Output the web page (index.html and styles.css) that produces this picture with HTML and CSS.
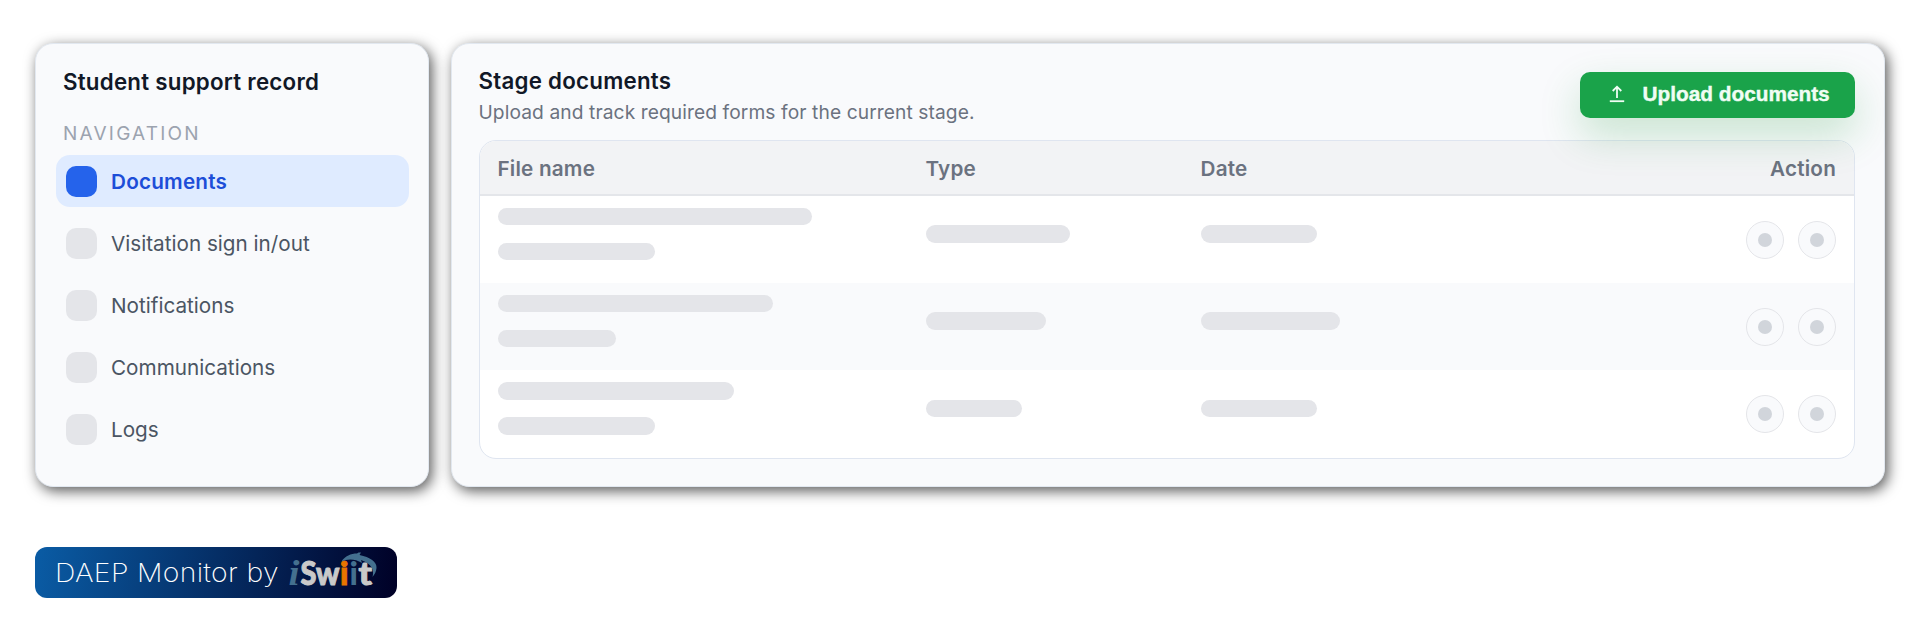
FILE: index.html
```
<!DOCTYPE html>
<html>
	<head>
		<meta charset="UTF-8">
		<title>DAEP Monitor</title>
		<link rel="stylesheet" href="styles.css">
	</head>
	<body>
		<div class="wrap">
			<div class="card side">
				<h2 class="side-title">Student support record</h2>
				<p class="side-label">NAVIGATION</p>
				<ul class="nav">
					<li class="active"><i></i><span>Documents</span></li>
					<li><i></i><span>Visitation sign in/out</span></li>
					<li><i></i><span>Notifications</span></li>
					<li><i></i><span>Communications</span></li>
					<li><i></i><span>Logs</span></li>
				</ul>
			</div>
			<div class="card main">
				<div class="head">
					<div class="head-txt">
						<h2>Stage documents</h2>
						<p>Upload and track required forms for the current stage.</p>
					</div>
					<button class="upload" type="button">
						<svg width="16" height="18" viewBox="0 0 16 18" fill="none" stroke="#f0fdf4" stroke-width="1.8">
							<path d="M8 13V2M3.7 6L8 1.7L12.3 6"/>
							<path d="M.8 16.2H15.2"/>
						</svg>
						<span>Upload documents</span>
					</button>
				</div>
				<div class="table">
					<div class="tr th">
						<span>File name</span>
						<span>Type</span>
						<span>Date</span>
						<span class="right">Action</span>
					</div>
					<div class="tr">
						<div class="file"><b class="bar w314"></b><b class="bar w157"></b></div>
						<div><b class="bar w144"></b></div>
						<div><b class="bar w116"></b></div>
						<div class="act"><i></i><i></i></div>
					</div>
					<div class="tr even">
						<div class="file"><b class="bar w275"></b><b class="bar w118"></b></div>
						<div><b class="bar w120"></b></div>
						<div><b class="bar w139"></b></div>
						<div class="act"><i></i><i></i></div>
					</div>
					<div class="tr">
						<div class="file"><b class="bar w236"></b><b class="bar w157"></b></div>
						<div><b class="bar w96"></b></div>
						<div><b class="bar w116"></b></div>
						<div class="act"><i></i><i></i></div>
					</div>
				</div>
			</div>
		</div>
		<div class="badge">
			<span>DAEP Monitor by</span>
			<svg class="logo" width="92" height="42" viewBox="0 0 92 42">
				<g class="logo-txt">
					<text class="slate script" x="1.500" y="35" textLength="11" lengthAdjust="spacingAndGlyphs">i</text>
					<text class="gray" x="13.500" y="34.500" textLength="39" lengthAdjust="spacingAndGlyphs">Sw</text>
					<text class="orange" x="53" y="34.500">i</text>
					<text class="slate" x="62.500" y="34.500">i</text>
					<text class="gray" x="71.500" y="34.500" textLength="13.500" lengthAdjust="spacingAndGlyphs">t</text>
				</g>
				<path class="slate" d="M54.500 11.500C58 6 64 3.500 70 3.500L71.500 2.500H74L72.500 5C83 7 90 12 89.500 18C89.300 21.500 87.500 24.500 85.500 27C87.500 20 84.500 13.500 74 10L75 13C68 8.500 60.500 8.500 54.500 11.500Z"/>
			</svg>
		</div>
	</body>
</html>
```
FILE: styles.css
```
*{margin: 0;padding: 0;box-sizing: border-box;}
body{
	background: #fff;
	font-family: Inter, "Liberation Sans", sans-serif;
	color: #111827;
}
ul{list-style: none;}
.wrap{
	display: flex;
	gap: 22px;
	padding: 43px 35px 0;
}
.card{
	height: 444px;
	background: #f9fafc;
	border: 1px solid #e2e8f0;
	border-radius: 18px;
	box-shadow: 3px 4px 14px rgba(0,0,0,.65);
}
.side{
	width: 394px;
	padding: 23px 19px 0 20px;
}
.side-title{
	padding-left: 7px;
	font-size: 22.3px;
	line-height: 30px;
	font-weight: 600;
	letter-spacing: .25px;
}
.side-label{
	padding-left: 7px;
	margin-top: 23px;
	font-size: 19px;
	line-height: 28px;
	letter-spacing: 2.2px;
	color: #9ca3af;
}
.nav{
	display: grid;
	gap: 10.2px;
	margin-top: 7px;
}
.nav li{
	display: flex;
	align-items: center;
	gap: 14px;
	height: 52px;
	padding-left: 10px;
	border-radius: 14px;
	font-size: 20.7px;
	color: #4b5563;
}
.nav i{
	width: 31px;
	height: 31px;
	border-radius: 10px;
	background: #e4e5e9;
}
.nav .active{
	background: #dfebff;
	color: #1d4ed8;
	font-weight: 600;
	letter-spacing: .2px;
}
.nav .active i{background: #2563eb;}
.main{
	flex: 1;
	padding: 21px 29px 0 26.5px;
}
.head{
	display: flex;
	justify-content: space-between;
	height: 75px;
}
.head h2{
	margin-top: 1px;
	font-size: 22.3px;
	line-height: 30px;
	font-weight: 600;
	letter-spacing: .25px;
}
.head p{
	font-size: 19.2px;
	line-height: 32px;
	letter-spacing: .09px;
	color: #6b7280;
}
.upload{
	position: relative;
	display: flex;
	align-items: center;
	gap: 18px;
	width: 275px;
	height: 46px;
	margin-top: 7px;
	padding: 0 0 2px 28.5px;
	border: 0;
	border-radius: 10px;
	background: #1aa34a;
	box-shadow: 0 17px 40px rgba(22,150,50,.22);
	color: #f0fdf4;
	font: 700 20.8px "Liberation Sans", Arial, sans-serif;
	-webkit-text-stroke: .4px #f0fdf4;
	white-space: nowrap;
}
.table{
	height: 318.5px;
	border: 1.5px solid #dfe5f0;
	border-radius: 17px;
	background: #fff;
	overflow: hidden;
}
.tr{
	display: grid;
	grid-template-columns: 428px 275px 1fr 120px;
	height: 87.2px;
	padding: 0 18px;
}
.th{
	height: 55px;
	align-items: center;
	padding-top: 1px;
	border-bottom: 2px solid #e4e6ea;
	background: #f2f3f5;
	font-size: 20.7px;
	font-weight: 600;
	letter-spacing: .2px;
	color: #6b7280;
}
.right{text-align: right;}
.even{background: #f9fafc;}
.bar{
	display: block;
	height: 17.5px;
	margin-top: 29.3px;
	border-radius: 9px;
	background: #e4e5e9;
}
.file .bar{margin-top: 11.7px;}
.file .bar + .bar{margin-top: 17.5px;}
.w314{width: 314px;}
.w275{width: 275px;}
.w236{width: 236px;}
.w157{width: 157px;}
.w144{width: 144px;}
.w139{width: 139px;}
.w120{width: 120px;}
.w118{width: 118px;}
.w116{width: 116px;}
.w96{width: 96px;}
.act{
	display: flex;
	align-items: center;
	justify-content: flex-end;
	gap: 14px;
}
.act i{
	display: flex;
	align-items: center;
	justify-content: center;
	width: 38px;
	height: 38px;
	border: 1.5px solid #e4e5e9;
	border-radius: 50%;
	background: #f9fafc;
}
.act i::after{
	content: "";
	width: 14px;
	height: 14px;
	border-radius: 50%;
	background: #d1d5db;
}
.badge{
	display: flex;
	align-items: center;
	width: 362px;
	height: 51px;
	margin: 59.6px 0 0 35px;
	padding-left: 20px;
	border-radius: 12px;
	background: linear-gradient(98deg, #0a5ca5, #000026);
	color: #fff;
}
.badge span{
	width: 232px;
	font-size: 26px;
	font-weight: 200;
	letter-spacing: .3px;
	white-space: nowrap;
	transform: scaleX(1.09);
	transform-origin: 0 50%;
}
.logo{margin-top: -3px;}
.logo-txt{
	font-family: Lato, sans-serif;
	font-weight: 900;
	font-size: 32.5px;
}
.script{
	font-family: "Liberation Serif", serif;
	font-style: italic;
	font-weight: 700;
	font-size: 36px;
}
.gray{fill: #c9c9c9;}
.orange{fill: #e87500;}
.slate{fill: #44708f;}
.logo-txt .gray{stroke: #c9c9c9;}
.logo-txt .orange{stroke: #e87500;}
```
